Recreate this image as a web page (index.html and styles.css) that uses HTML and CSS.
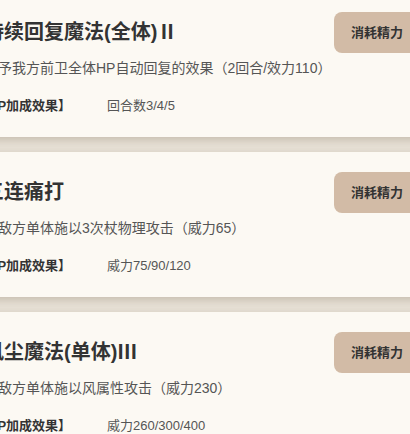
FILE: index.html
```html
<!DOCTYPE html>
<html lang="zh">
<head>
<meta charset="utf-8">
<link rel="stylesheet" href="styles.css">
</head>
<body>
<div class="list">
  <div class="card">
    <div class="info">
      <div class="title">持续回复魔法(全体)Ⅱ</div>
      <div class="desc">给予我方前卫全体HP自动回复的效果（2回合/效力110）</div>
      <div class="bonus"><span class="label">【HP加成效果】</span><span class="value">回合数3/4/5</span></div>
    </div>
    <div class="cost">消耗精力</div>
  </div>
  <div class="card">
    <div class="info">
      <div class="title">三连痛打</div>
      <div class="desc">对敌方单体施以3次杖物理攻击（威力65）</div>
      <div class="bonus"><span class="label">【HP加成效果】</span><span class="value">威力75/90/120</span></div>
    </div>
    <div class="cost">消耗精力</div>
  </div>
  <div class="card">
    <div class="info">
      <div class="title">风尘魔法(单体)Ⅲ</div>
      <div class="desc">对敌方单体施以风属性攻击（威力230）</div>
      <div class="bonus"><span class="label">【HP加成效果】</span><span class="value">威力260/300/400</span></div>
    </div>
    <div class="cost">消耗精力</div>
  </div>
</div>
</body>
</html>
```

FILE: styles.css
```css
html, body {
  margin: 0;
  padding: 0;
  background: #e7e1d6;
  overflow: hidden;
  font-family: "Liberation Sans", "Noto Sans CJK SC", sans-serif;
}
.list {
  width: 480px;
  margin-left: -40px;
  margin-top: -8px;
  display: flex;
  flex-direction: column;
  gap: 15px;
}
.card {
  background: #fcf9f3;
  box-shadow: 0 3px 8px rgba(80, 60, 30, 0.22);
  display: flex;
  justify-content: space-between;
  align-items: flex-start;
  padding: 20px 20px 21px 24px;
  height: 145px;
  box-sizing: border-box;
}
.title {
  margin-top: 6px;
  font-size: 20px;
  line-height: 28px;
  font-weight: 700;
  color: #333;
  white-space: nowrap;
}
.desc {
  margin-top: 12px;
  font-size: 14px;
  line-height: 20px;
  color: #555;
  white-space: nowrap;
}
.bonus {
  margin-top: 18px;
  margin-left: -9px;
  font-size: 13px;
  line-height: 20px;
  display: flex;
  white-space: nowrap;
}
.label {
  width: 132px;
  font-weight: 700;
  color: #333;
}
.value {
  color: #555;
}
.cost {
  background: #d2bba6;
  color: #333;
  font-weight: 700;
  font-size: 13px;
  line-height: 41px;
  height: 41px;
  padding: 0 17px;
  border-radius: 8px;
  white-space: nowrap;
}
```
